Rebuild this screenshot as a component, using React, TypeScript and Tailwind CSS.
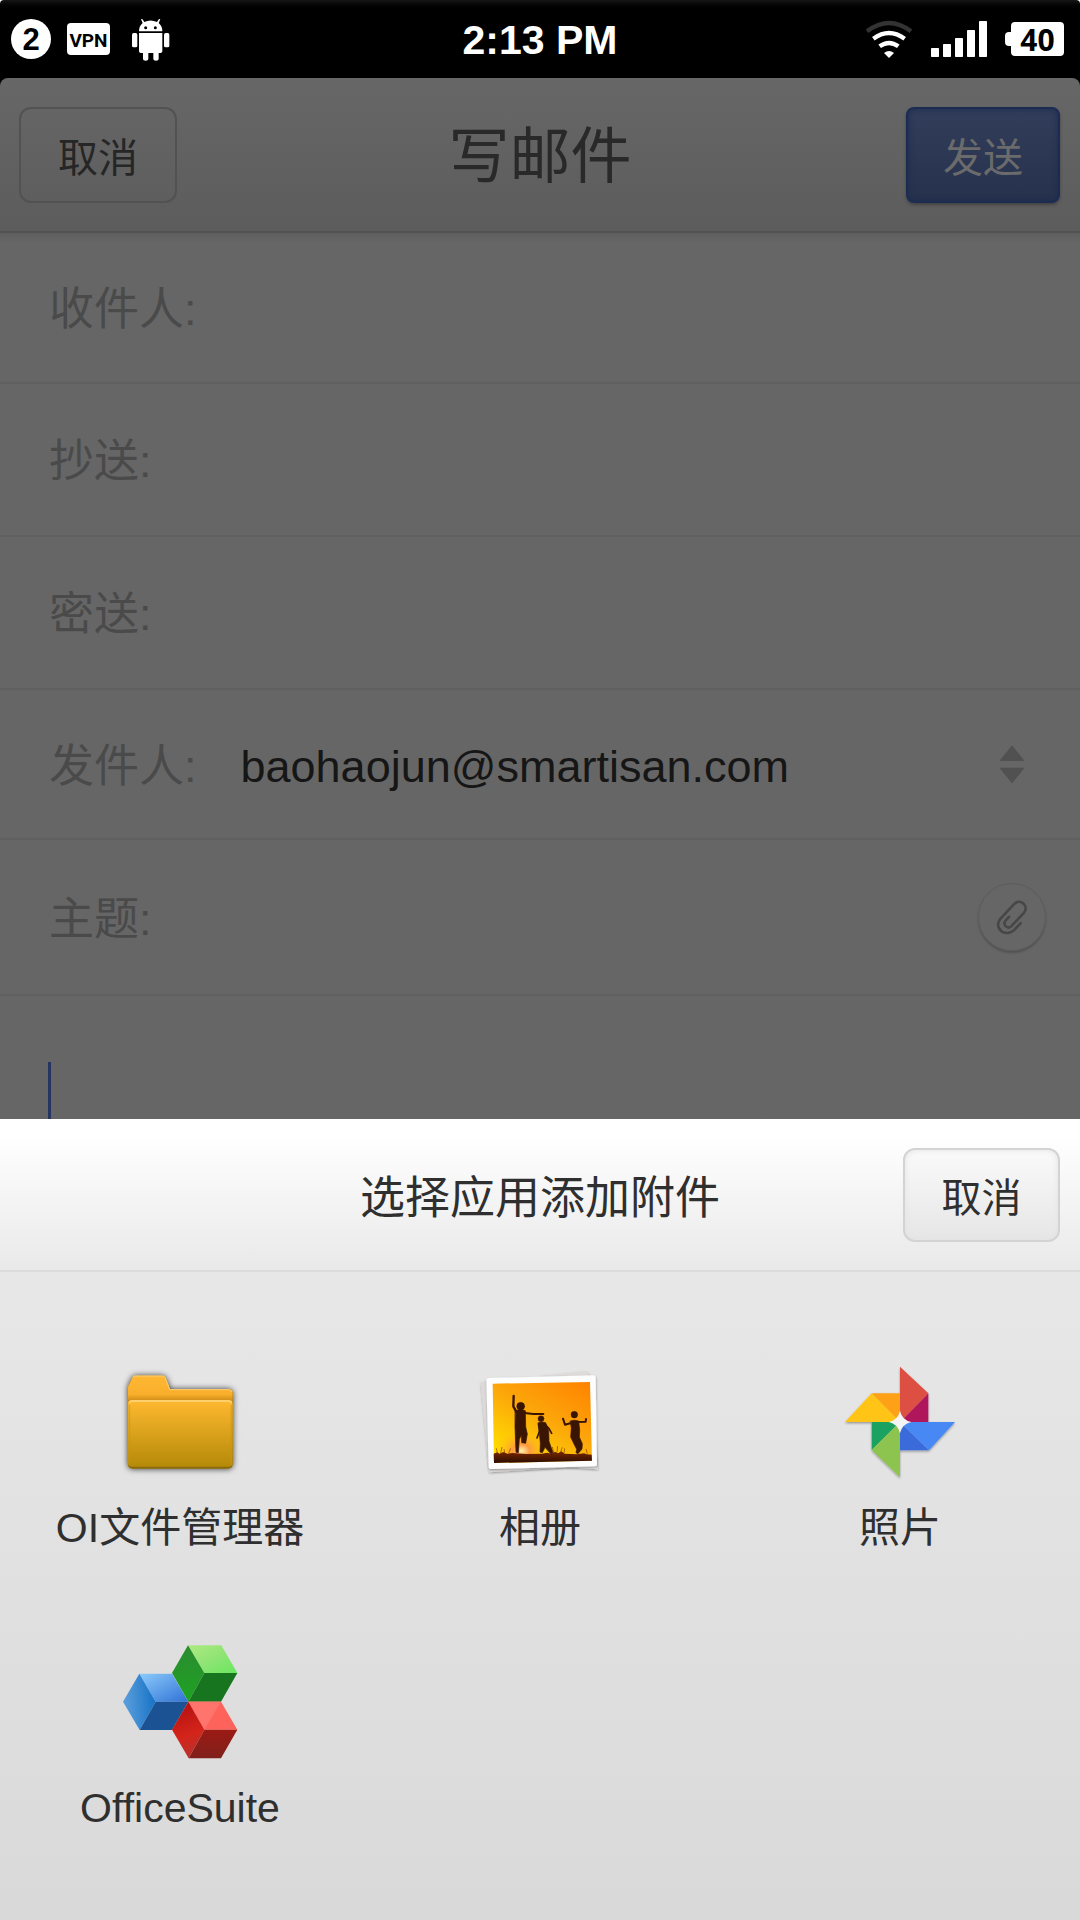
import React from "react";

const FONT = "font-['Liberation_Sans','Noto_Sans_CJK_SC',sans-serif]";

function AndroidIcon() {
  return (
    <svg viewBox="393 51 117 129" className="h-[43px] w-[39px]" fill="#fff" aria-hidden="true">
      <path d="M423 55l4-1 6 9q18-9 38 0l6-9 4 1-5 11q11 9 11 25h-70q0-16 11-25z" />
      <path d="M417 96h70v55q0 5-6 5h-5v18q0 5-8 5t-8-5v-18h-15v18q0 5-8 5t-8-5v-18h-6q-6 0-6-5z" />
      <rect x="396" y="96" width="16" height="43" rx="5" />
      <rect x="492" y="96" width="16" height="43" rx="5" />
      <circle cx="437" cy="80" r="4.500" fill="#000" />
      <circle cx="466" cy="80" r="4.500" fill="#000" />
    </svg>
  );
}

function WifiIcon() {
  return (
    <svg viewBox="135 57 144 117" className="h-[39px] w-12 shrink-0" fill="none" strokeWidth="13" aria-hidden="true">
      <path d="M141 91Q207 41 273 91" stroke="#333" />
      <path d="M160 113Q207 79 254 113" stroke="#fff" />
      <path d="M179 136Q207 116 235 136" stroke="#fff" />
      <path d="M192 156q15-12 30 0l-15 15z" fill="#fff" />
    </svg>
  );
}

function SignalIcon() {
  return (
    <svg viewBox="333 60 168 108" className="h-9 w-14 shrink-0" fill="#fff" aria-hidden="true">
      <rect x="333" y="141" width="24" height="27" rx="2" />
      <rect x="369" y="129" width="24" height="39" rx="2" />
      <rect x="405" y="111" width="24" height="57" rx="2" />
      <rect x="441" y="87" width="24" height="81" rx="2" />
      <rect x="477" y="60" width="24" height="108" rx="2" />
    </svg>
  );
}

function StatusBar() {
  return (
    <div className="grid h-[78px] grid-cols-[1fr_auto_1fr] items-center rounded-t bg-black bg-linear-to-b from-[#161616] to-black to-15% text-white">
      <div className="flex items-center gap-4 pl-[11px]">
        <span className="flex size-10 items-center justify-center rounded-full bg-white text-[31px] leading-none font-bold text-black">
          2
        </span>
        <span className="flex h-8 w-[43px] items-center justify-center rounded-sm bg-white pt-0.5 font-[Roboto] text-[19px] leading-none font-bold text-black">
          VPN
        </span>
        <span className="pl-[5px]">
          <AndroidIcon />
        </span>
      </div>
      <div className="pt-0.5 text-[41px] leading-none font-bold">2:13 PM</div>
      <div className="flex items-center justify-end gap-[18px] pr-4">
        <WifiIcon />
        <SignalIcon />
        <div className="flex items-center">
          <span className="h-3.5 w-1.5 rounded-l-sm bg-white" />
          <span className="flex h-[34px] w-[53px] items-center justify-center rounded-sm bg-white pt-0.5 font-['Open_Sans'] text-[30px] leading-none font-bold text-black">
            40
          </span>
        </div>
      </div>
    </div>
  );
}

function Header() {
  return (
    <header className="grid h-[155px] grid-cols-[1fr_auto_1fr] items-center rounded-t-lg border-b-2 border-[#525252] bg-linear-to-b from-[#676767] to-[#5c5c5c] px-5">
      <button
        type="button"
        className="-ml-px h-24 w-[158px] justify-self-start rounded-xl border-2 border-[#525252] pt-1.5 text-[40px] leading-none text-[#262626]"
      >
        取消
      </button>
      <h1 className="pt-1.5 text-[61px] leading-none text-[#292929]">写邮件</h1>
      <button
        type="button"
        className="h-24 w-[154px] justify-self-end rounded-lg border-2 border-[#1c2b52] bg-linear-to-b from-[#313d5a] to-[#27324d] pt-1.5 text-[40px] leading-none text-[#6b6b6b] shadow-[inset_0_0_6px_#1c2b52,0_2px_3px_#444]"
      >
        发送
      </button>
    </header>
  );
}

function Field({ id, label, height, children }: { id: string; label: string; height: string; children?: React.ReactNode }) {
  return (
    <div className={`flex items-center border-b-2 border-[#606060] pr-[34px] pl-[49px] ${height}`}>
      <label htmlFor={id} className="shrink-0 pt-1 text-[45px] leading-none text-[#4a4a4a]">
        {label}
      </label>
      {children ?? <input id={id} type="text" className="ml-11 min-w-0 flex-1 bg-transparent text-[45px] text-[#161616] outline-none" />}
    </div>
  );
}

function SortArrows() {
  return (
    <svg viewBox="90 42 72 114" className="mr-[22px] h-[38px] w-6 shrink-0" fill="#515151" stroke="#515151" strokeWidth="4" strokeLinejoin="round" aria-hidden="true">
      <path d="M126 46l34 42H92z" />
      <path d="M92 112h68l-34 42z" />
    </svg>
  );
}

function PaperclipIcon() {
  return (
    <svg viewBox="72 508 102 110" className="h-[37px] w-[34px]" fill="none" stroke="#474747" strokeWidth="8" strokeLinecap="round" strokeLinejoin="round" aria-hidden="true">
      <path d="M149 580l-19 20c-10 10-25 12-36 6-14-9-17-26-6-39l41-44c9-9 20-9 28-2 9 8 9 20 1 29l-36 38c-6 6-13 6-18 1-5-6-5-12 1-18l9-10" />
    </svg>
  );
}

function FolderIcon() {
  return (
    <svg viewBox="240 36 360 360" className="size-[120px] overflow-visible" aria-hidden="true">
      <defs>
        <linearGradient id="folderFront" x1="0" y1="0" x2="0" y2="1">
          <stop offset="0" stopColor="#ffb930" />
          <stop offset="1" stopColor="#b58a08" />
        </linearGradient>
        <linearGradient id="folderBack" x1="0" y1="0" x2="0" y2="1">
          <stop offset="0" stopColor="#ffb833" />
          <stop offset="0.700" stopColor="#f9ae2b" />
          <stop offset="1" stopColor="#c08210" />
        </linearGradient>
        <filter id="folderShadow" x="-20%" y="-20%" width="140%" height="140%">
          <feDropShadow dx="0" dy="0" stdDeviation="9" floodColor="#000" floodOpacity="0.800" />
        </filter>
      </defs>
      <path filter="url(#folderShadow)" fill="#8a6a08" d="M264 110l13-27q3-6 9-6h82q6 0 9 6l13 35h176q12 0 12 12v213q0 13-13 13H277q-13 0-13-13z" />
      <path fill="url(#folderBack)" d="M264 110l13-27q3-6 9-6h82q6 0 9 6l13 35h176q12 0 12 12v28H264z" />
      <path fill="none" stroke="#ffcf78" strokeWidth="3" d="M278 82q3-4 8-4h82q5 0 8 6l13 35h176q9 0 11 7" />
      <rect x="264" y="150" width="314" height="200" rx="12" fill="url(#folderFront)" />
      <path fill="none" stroke="#ffd06e" strokeWidth="6" d="M268 159q2-6 10-6h286q8 0 10 6" />
      <path fill="none" stroke="#c99413" strokeOpacity="0.500" strokeWidth="5" d="M268 165v180M574 165v180" />
    </svg>
  );
}

function AlbumIcon() {
  return (
    <svg viewBox="60 36 360 360" className="size-[120px] overflow-visible" aria-hidden="true">
      <defs>
        <linearGradient id="sunset" x1="0.900" y1="0" x2="0.200" y2="1">
          <stop offset="0" stopColor="#ff8500" />
          <stop offset="0.450" stopColor="#fca50a" />
          <stop offset="1" stopColor="#ffe000" />
        </linearGradient>
        <radialGradient id="sun" cx="0.290" cy="0.850" r="0.280">
          <stop offset="0" stopColor="#fff3b0" />
          <stop offset="0.300" stopColor="#ff9a3c" />
          <stop offset="1" stopColor="#ffcf00" stopOpacity="0" />
        </radialGradient>
        <linearGradient id="ground" x1="0" y1="0" x2="0" y2="1">
          <stop offset="0" stopColor="#7a2600" />
          <stop offset="1" stopColor="#2a0c02" />
        </linearGradient>
        <filter id="photoShadow" x="-20%" y="-20%" width="140%" height="140%">
          <feDropShadow dx="1" dy="3" stdDeviation="3" floodColor="#000" floodOpacity="0.350" />
        </filter>
      </defs>
      <g filter="url(#photoShadow)">
        <path fill="#dcd9d8" d="M62 97l26-5 305 250-4 5-302 20z" />
        <path fill="#dedbda" d="M240 78l138-14 7 4 28 290-120-8z" />
      </g>
      <path filter="url(#photoShadow)" fill="#fdfdfd" d="M85 84l316-8q6 0 6 6l4 261q0 6-6 6l-313 8q-6 0-6-6L79 90q0-6 6-6z" />
      <path fill="url(#sunset)" d="M98 101l292-5 6 236-294 7z" />
      <path fill="url(#sun)" d="M98 101l292-5 6 236-294 7z" />
      <path fill="url(#ground)" d="M101 311L112 307 118 311 130 306 142 311 158 309 200 312 245 311 262 308 274 311 285 305 294 310 304 304 314 311 350 313 372 310 380 313 395 314 396 332 102 339z" />
      <path fill="none" stroke="#8a3a00" strokeWidth="2" d="M112 309l-3-14M122 309l4-18M134 309l-2-12M146 309l6-14M281 307l-4-16M291 308l2-20M301 308l6-16M312 309l2-14M382 311l-4-14" />
      <g fill="#3a1504" stroke="#3a1504" strokeLinejoin="round" strokeLinecap="round">
        <circle cx="182" cy="169" r="12" />
        <path strokeWidth="7" fill="none" d="M170 187l-10-18 1-31" />
        <path strokeWidth="6" fill="none" d="M194 189l26 3 30 0" />
        <path strokeWidth="2" d="M166 182q16-6 30 0l1 48 5 22-5 28-12-2-1-22-6 12-3 40-7-1-2-49-1-26z" />
        <circle cx="243" cy="206" r="9" />
        <path strokeWidth="5" fill="none" d="M236 222l3 20-8 22M254 222l13 14 8 14" />
        <path strokeWidth="2" d="M235 218q11-4 22 0l9 24 1 32 12 34-6 4-18-20-8 16-7-2 1-26z" />
        <circle cx="343" cy="194" r="10" />
        <path strokeWidth="6" fill="none" d="M331 220l-16 4-6-18M353 216l24-1 1-8" />
        <path strokeWidth="2" d="M331 213q13-5 25 0l3 26-1 22 9 20-1 16-12 14-6-3 2-10-8-16-10-21 2-26z" />
      </g>
    </svg>
  );
}

function PhotosIcon() {
  return (
    <svg viewBox="60 36 360 360" className="size-[120px] overflow-visible" aria-hidden="true">
      <defs>
        <filter id="wheelShadow" x="-20%" y="-20%" width="140%" height="140%">
          <feDropShadow dx="0" dy="4" stdDeviation="3" floodColor="#000" floodOpacity="0.350" />
        </filter>
      </defs>
      <g filter="url(#wheelShadow)">
        <path fill="#ffa114" d="M155 130h85v86z" />
        <path fill="#ffc414" d="M155 130l85 86H75z" />
        <path fill="#b0195c" d="M325 130v86h-85z" />
        <path fill="#dd4f43" d="M240 50l85 80-85 86z" />
        <path fill="#3a6bdb" d="M240 216l87 85h-87z" />
        <path fill="#4688f4" d="M240 216h165l-78 85z" />
        <path fill="#1aa260" d="M155 216h85l-85 84z" />
        <path fill="#8cc450" d="M240 216v166l-85-82z" />
      </g>
      <path fill="#f4f4f4" d="M240 182q6 28 34 34-28 6-34 34-6-28-34-34 28-6 34-34z" />
    </svg>
  );
}

function OfficeIcon() {
  return (
    <svg viewBox="180 66 360 360" className="size-[120px]" aria-hidden="true">
      <defs>
        <linearGradient id="blueTop" x1="0" y1="0" x2="1" y2="1">
          <stop offset="0" stopColor="#8ccbfb" />
          <stop offset="1" stopColor="#2f72d6" />
        </linearGradient>
        <linearGradient id="blueSide" x1="0" y1="0.500" x2="1" y2="0.400">
          <stop offset="0" stopColor="#5f9fdc" />
          <stop offset="1" stopColor="#1473c6" />
        </linearGradient>
        <linearGradient id="greenTop" x1="0" y1="0" x2="1" y2="1">
          <stop offset="0" stopColor="#aeea80" />
          <stop offset="0.500" stopColor="#8fe474" />
          <stop offset="1" stopColor="#69e860" />
        </linearGradient>
        <linearGradient id="greenSide" x1="0.500" y1="0" x2="0.500" y2="1">
          <stop offset="0" stopColor="#2b8b30" />
          <stop offset="1" stopColor="#1ea323" />
        </linearGradient>
        <linearGradient id="redSide" x1="0.300" y1="0" x2="0.500" y2="1">
          <stop offset="0" stopColor="#b11010" />
          <stop offset="0.600" stopColor="#d4241a" />
          <stop offset="1" stopColor="#b8322c" />
        </linearGradient>
        <linearGradient id="redBottom" x1="0" y1="0" x2="0" y2="1">
          <stop offset="0" stopColor="#9c1a14" />
          <stop offset="1" stopColor="#80201b" />
        </linearGradient>
      </defs>
      <path fill="url(#blueTop)" d="M238 161h98l49 84h-98z" />
      <path fill="url(#blueSide)" d="M238 161l49 84-48 85-50-85z" />
      <path fill="#1a5294" d="M287 245h98l-49 85h-97z" />
      <path fill="url(#greenTop)" d="M384 76h100l48 83h-99z" />
      <path fill="url(#greenSide)" d="M384 76l49 83-48 86-49-86z" />
      <path fill="#18751f" d="M433 159h99l-49 86h-98z" />
      <path fill="#fd635a" d="M385 245h98l49 84h-99z" />
      <path fill="#ff746c" d="M385 245h98l-50 84z" />
      <path fill="url(#redSide)" d="M385 245l48 84-47 86-50-86z" />
      <path fill="url(#redBottom)" d="M433 329h99l-49 86h-97z" />
    </svg>
  );
}

const apps = [
  { name: "OI文件管理器", Icon: FolderIcon },
  { name: "相册", Icon: AlbumIcon },
  { name: "照片", Icon: PhotosIcon },
  { name: "OfficeSuite", Icon: OfficeIcon },
];

function AttachmentSheet() {
  return (
    <section role="dialog" aria-labelledby="sheet-title" className="bg-linear-to-b from-[#ebebeb] to-[#d9d9d9]">
      <div className="grid h-[153px] grid-cols-[1fr_auto_1fr] items-center border-b-2 border-[#dcdcdc] bg-linear-to-b from-white from-10% to-[#e9e9e9] px-5">
        <h2 id="sheet-title" className="col-start-2 pt-2 text-[45px] leading-none text-[#2f2f2f]">
          选择应用添加附件
        </h2>
        <button
          type="button"
          className="h-[94px] w-[157px] justify-self-end rounded-xl border-2 border-[#d3d3d3] bg-linear-to-b from-[#fafafa] to-[#e6e6e6] pt-1.5 text-[40px] leading-none text-[#2f2f2f] shadow-[inset_0_0_6px_#e2e2e2]"
        >
          取消
        </button>
      </div>
      <div className="grid grid-cols-3 gap-y-[84px] pt-[90px] pb-[82px]">
        {apps.map(({ name, Icon }) => (
          <button key={name} type="button" className="flex flex-col items-center gap-4">
            <Icon />
            <span className="text-[41px] leading-[60px] text-[#2f2f2f]">{name}</span>
          </button>
        ))}
      </div>
    </section>
  );
}

export default function App() {
  return (
    <div className={`flex min-h-screen flex-col bg-white ${FONT}`}>
      <StatusBar />
      <main className="flex flex-1 flex-col bg-black">
        <Header />
        <form className="flex flex-1 flex-col bg-linear-to-b from-[#5e5e5e] to-[#666] to-1%">
          <Field id="to" label="收件人:" height="h-[151px]" />
          <Field id="cc" label="抄送:" height="h-[153px]" />
          <Field id="bcc" label="密送:" height="h-[153px]" />
          <Field id="from" label="发件人:" height="h-[150px]">
            <select
              id="from"
              className="ml-11 min-w-0 flex-1 appearance-none bg-transparent pt-1.5 text-[45px] text-[#161616] outline-none"
            >
              <option>baohaojun@smartisan.com</option>
            </select>
            <SortArrows />
          </Field>
          <Field id="subject" label="主题:" height="h-[156px]">
            <input id="subject" type="text" className="ml-11 min-w-0 flex-1 bg-transparent text-[45px] text-[#161616] outline-none" />
            <button
              type="button"
              aria-label="添加附件"
              className="flex size-[68px] items-center justify-center rounded-full border border-[#5c5c5c] shadow-[0_2px_2px_#515151]"
            >
              <PaperclipIcon />
            </button>
          </Field>
          <div className="flex flex-1 pt-[66px] pl-12">
            <span className="w-[3px] bg-[#253560]" />
            <textarea aria-label="正文" className="h-14 flex-1 resize-none bg-transparent text-[45px] text-[#161616] outline-none" />
          </div>
        </form>
      </main>
      <AttachmentSheet />
    </div>
  );
}
